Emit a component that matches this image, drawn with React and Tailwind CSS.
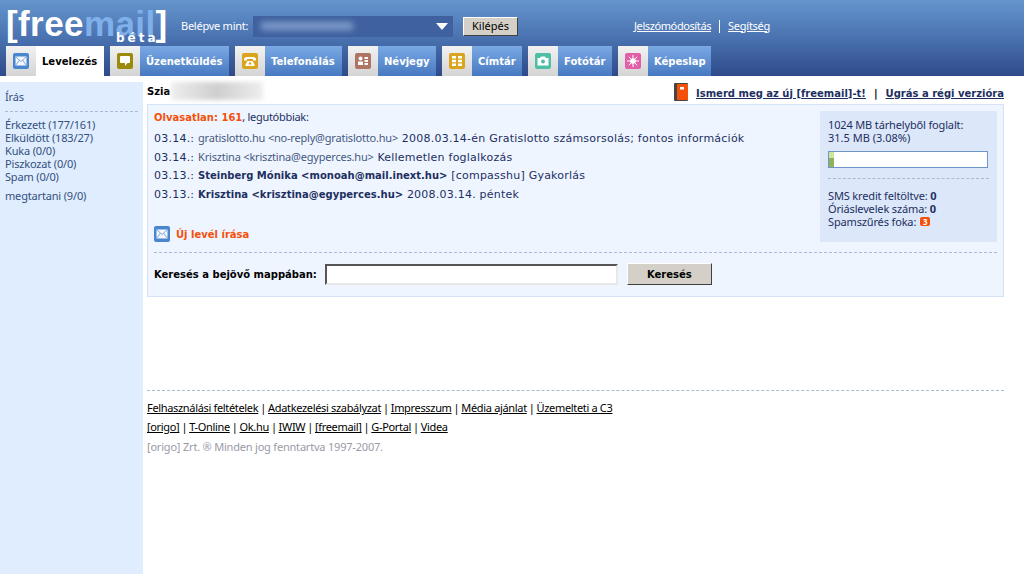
import React from 'react';

const tahoma = "font-['Noto_Sans','Open_Sans',sans-serif]";
const verdana = "font-['DejaVu_Sans',sans-serif]";

const MailIcon = ({ size = 16 }) => (
  <svg width={size} height={size} viewBox="0 0 16 16" className="block">
    <rect width="16" height="16" rx="2" fill="#4a86cf" />
    <rect x="2.500" y="3.500" width="11" height="9" fill="#f4f8fe" />
    <path d="M2.500 3.500 8 8.500l5.500-5M2.500 12.500 6.500 7M13.500 12.500 9.500 7" stroke="#7fa8dc" fill="none" strokeWidth="1" />
  </svg>
);

const ChatIcon = () => (
  <svg width="16" height="16" viewBox="0 0 16 16" className="block">
    <rect width="16" height="16" rx="2" fill="#9b8a0c" />
    <path d="M4 3h8a1 1 0 0 1 1 1v5a1 1 0 0 1-1 1h-1.500L8 13V10H4a1 1 0 0 1-1-1V4a1 1 0 0 1 1-1z" fill="#fff" />
  </svg>
);

const PhoneIcon = () => (
  <svg width="16" height="16" viewBox="0 0 16 16" className="block">
    <rect width="16" height="16" rx="2" fill="#d9a51c" />
    <path d="M2 7.500V5.500L4 4h8l2 1.500v2h-3V6H5v1.500z" fill="#fff" />
    <path d="M3.500 13V11.500L5.500 8h5l2 3.500V13z" fill="#fff" />
    <circle cx="8" cy="10.500" r="1.300" fill="#d9a51c" />
  </svg>
);

const CardIcon = () => (
  <svg width="16" height="16" viewBox="0 0 16 16" className="block">
    <rect width="16" height="16" rx="2" fill="#ae7565" />
    <circle cx="5.500" cy="5.500" r="2" fill="#fff" />
    <path d="M3 12V8.500h5V12zM9.500 4H13v2H9.500zM9.500 7H13v2H9.500zM9.500 10H13v2H9.500z" fill="#fff" />
  </svg>
);

const GridIcon = () => (
  <svg width="16" height="16" viewBox="0 0 16 16" className="block">
    <rect width="16" height="16" rx="2" fill="#d9a51c" />
    <path d="M3 3h4v2.500H3zM9 3h4v2.500H9zM3 6.800h4v2.500H3zM9 6.800h4v2.500H9zM3 10.600h4v2.500H3zM9 10.600h4v2.500H9z" fill="#fff" />
  </svg>
);

const CameraIcon = () => (
  <svg width="16" height="16" viewBox="0 0 16 16" className="block">
    <rect width="16" height="16" rx="2" fill="#4dbfa5" />
    <path d="M2.500 5H5l1-1.500h4L11 5h2.500v7.500h-11z" fill="#fff" />
    <circle cx="8" cy="8.500" r="2" fill="#4dbfa5" />
  </svg>
);

const SunIcon = () => (
  <svg width="16" height="16" viewBox="0 0 16 16" className="block">
    <rect width="16" height="16" rx="2" fill="#e05fa8" />
    <circle cx="8" cy="8" r="2.800" fill="#fff" />
    <path d="M8 2v12M2 8h12M3.800 3.800l8.400 8.400M12.200 3.800l-8.400 8.400" stroke="#fff" strokeWidth="1" />
  </svg>
);

const tabs = [
  { label: 'Levelezés', Icon: MailIcon, width: 'w-[98px]', active: true },
  { label: 'Üzenetküldés', Icon: ChatIcon, width: 'w-[119px]' },
  { label: 'Telefonálás', Icon: PhoneIcon, width: 'w-[107px]' },
  { label: 'Névjegy', Icon: CardIcon, width: 'w-[88px]' },
  { label: 'Címtár', Icon: GridIcon, width: 'w-[80px]' },
  { label: 'Fotótár', Icon: CameraIcon, width: 'w-[84px]' },
  { label: 'Képeslap', Icon: SunIcon, width: 'w-[93px]' },
];

const folders = ['Érkezett (177/161)', 'Elküldött (183/27)', 'Kuka (0/0)', 'Piszkozat (0/0)', 'Spam (0/0)'];

const mails = [
  { date: '03.14.:', from: 'gratislotto.hu <no-reply@gratislotto.hu>', subject: '2008.03.14-én Gratislotto számsorsolás; fontos információk' },
  { date: '03.14.:', from: 'Krisztina <krisztina@egyperces.hu>', subject: 'Kellemetlen foglalkozás' },
  { date: '03.13.:', from: 'Steinberg Mónika <monoah@mail.inext.hu>', subject: '[compasshu] Gyakorlás', unread: true },
  { date: '03.13.:', from: 'Krisztina <krisztina@egyperces.hu>', subject: '2008.03.14. péntek', unread: true },
];

const footer1 = ['Felhasználási feltételek', 'Adatkezelési szabályzat', 'Impresszum', 'Média ajánlat', 'Üzemelteti a C3'];
const footer2 = ['[origo]', 'T-Online', 'Ok.hu', 'IWIW', '[freemail]', 'G-Portal', 'Videa'];

function Tab({ label, Icon, width, active }) {
  return (
    <div className={`${width} h-[30px] flex`}>
      <div className="w-[30px] flex items-center justify-center bg-gradient-to-b from-[#f2f2f2] to-[#d4d4d4]">
        <Icon />
      </div>
      <div className={`flex-1 flex items-center pl-[6px] font-bold text-[10px] ${verdana} ${active ? 'bg-white text-black' : 'bg-gradient-to-b from-[#7aa9e4] to-[#4779c1] text-white'}`}>
        {label}
      </div>
    </div>
  );
}

function LinkRow({ items }) {
  return (
    <div className="flex items-center text-black text-[11px] tracking-[-0.33px] h-[19px]">
      {items.map((t, i) => (
        <React.Fragment key={t}>
          {i > 0 && <span className="px-[2px]">|</span>}
          <span className="underline">{t}</span>
        </React.Fragment>
      ))}
    </div>
  );
}

export default function App() {
  return (
    <div className={`w-[1024px] h-[574px] flex flex-col bg-white overflow-hidden ${tahoma}`}>
      <header className="h-[76px] shrink-0 bg-gradient-to-b from-[#6595cd] via-[#4a72b0] to-[#2f4a8a] flex flex-col">
        <div className="h-[46px] flex">
          <div className="w-[181px] relative pl-[6px] pt-[4px] font-['Liberation_Sans',sans-serif] font-bold text-[35px] leading-[40px] tracking-[0.4px] whitespace-nowrap text-white">
            [free<span className="text-[#7fb0ea]">mail</span>]
            <span className={`absolute left-[116px] top-[32px] text-[12px] leading-[12px] tracking-[3px] ${verdana}`}>béta</span>
          </div>
          <div className="flex items-center h-[42px] pt-[10px] text-[11px] text-white">
            <span className="w-[72px] tracking-[-0.25px]">Belépve mint:</span>
            <div className="w-[200px] h-[21px] bg-[#3f619f] flex items-center pl-[8px] pr-[4px]">
              <div className="w-[92px] h-[8px] bg-[#7f9ccb] blur-[3px]" />
              <svg width="14" height="7" viewBox="0 0 14 7" className="block ml-auto"><path d="M1 0h12L7 7z" fill="#fff" /></svg>
            </div>
            <button className="ml-[10px] w-[55px] h-[19px] bg-[#d4d0c8] text-black text-[11px] border border-t-white border-l-white border-r-[#404040] border-b-[#404040]">Kilépés</button>
            <span className="ml-[116px] underline tracking-[-0.4px]">Jelszómódosítás</span>
            <span className="w-px h-[13px] bg-white mx-[8px]" />
            <span className="underline tracking-[-0.25px]">Segítség</span>
          </div>
        </div>
        <nav className="flex gap-[6px] pl-[6px]">
          {tabs.map((t) => <Tab key={t.label} {...t} />)}
        </nav>
      </header>

      <div className="flex-1 flex pt-[6px]">
        <aside className="w-[143px] shrink-0 bg-[#e0edfe] text-[11px] tracking-[-0.17px] leading-[13px] text-[#33507f] px-[5px] pt-[8px]">
          <div>Írás</div>
          <div className="border-t border-dashed border-[#a9b9d6] mt-[8px] pt-[6px]">
            {folders.map((f) => <div key={f}>{f}</div>)}
            <div className="mt-[6px]">megtartani (9/0)</div>
          </div>
        </aside>

        <main className="w-[857px] ml-[4px]">
          <div className="h-[22px] flex items-center justify-between -mt-[2px]">
            <div className={`flex items-center font-bold text-[10px] text-black ${verdana}`}>
              Szia
              <div className="w-[92px] h-[18px] ml-[1px] bg-gradient-to-r from-[#eee] via-[#cfcfcf] to-[#eee] blur-[2px]" />
            </div>
            <div className={`flex items-center font-bold text-[10px] text-[#1d2f5f] pt-[4px] ${verdana}`}>
              <svg width="14" height="18" viewBox="0 0 14 18" className="mr-[8px] block -mt-[2px]">
                <rect width="14" height="18" rx="1" fill="#444" />
                <rect x="3" y="1" width="11" height="16" fill="#f5500a" />
                <rect x="6" y="4" width="4" height="2.500" fill="#fff" />
              </svg>
              <span className="underline">Ismerd meg az új [freemail]-t!</span>
              <span className="mx-[8px] text-black">|</span>
              <span className="underline">Ugrás a régi verzióra</span>
            </div>
          </div>

          <section className="h-[193px] mt-[2px] border border-[#d5e3f8] bg-[#eef5ff] flex flex-col">
            <div className="h-[147px] flex justify-between">
              <div className="pl-[6px] pt-[5px] flex flex-col">
                <div className="text-[11px] leading-[14px] text-[#1d2f5f] tracking-[-0.3px]">
                  <span className={`font-bold text-[10px] tracking-normal text-[#f5500a] ${verdana}`}>Olvasatlan: 161</span>, legutóbbiak:
                </div>
                <div className="mt-[3px] flex flex-col">
                  {mails.map((m) => (
                    <div key={m.from} className={`h-[19px] leading-[19px] whitespace-pre text-[11px] tracking-[0.23px] text-[#1d2f5f] ${verdana}`}>
                      {m.date}{' '}
                      {m.unread
                        ? <b className="text-[10px] tracking-normal">{m.from}</b>
                        : <span className={`${tahoma} tracking-[-0.2px] text-[#46597f]`}>{m.from}</span>}
                      {' '}{m.subject}
                    </div>
                  ))}
                </div>
                <div className={`mt-auto mb-[10px] flex items-center font-bold text-[10px] text-[#f5500a] ${verdana}`}>
                  <MailIcon size={16} />
                  <span className="ml-[6px]">Új levél írása</span>
                </div>
              </div>
              <div className="w-[177px] h-[131px] mt-[6px] mr-[6px] bg-[#dce7f9] px-[8px] pt-[7px] text-[11px] leading-[13px] text-[#1d2f5f]">
                <div className="tracking-[-0.15px]">1024 MB tárhelyből foglalt:</div>
                <div>31.5 MB (3.08%)</div>
                <div className="w-[160px] h-[17px] mt-[7px] border border-[#6f94c8] bg-white">
                  <div className="w-[5px] h-full bg-gradient-to-b from-[#cfe59a] from-40% to-[#8fb25a] to-40%" />
                </div>
                <div className="border-t border-dashed border-[#a9b9d6] mt-[10px] pt-[10px] tracking-[-0.15px]">
                  <div>SMS kredit feltöltve: <b>0</b></div>
                  <div>Óriáslevelek száma: <b>0</b></div>
                  <div className="flex items-center">
                    Spamszűrés foka:
                    <span className="ml-[4px] w-[10px] h-[9px] rounded-[2px] bg-[#f5500a] text-white font-bold text-[8px] leading-[9px] text-center">3</span>
                  </div>
                </div>
              </div>
            </div>
            <div className={`mx-[6px] border-t border-dashed border-[#a9b9d6] pt-[10px] flex items-center font-bold text-[10px] text-black ${verdana}`}>
              <span>Keresés a bejövő mappában:</span>
              <input className="ml-[8px] w-[293px] h-[21px] bg-white border-2 border-t-[#555] border-l-[#555] border-r-[#e8e8e8] border-b-[#e8e8e8]" />
              <button className="ml-[9px] w-[85px] h-[22px] bg-[#d4d0c8] font-bold border border-t-white border-l-white border-r-[#404040] border-b-[#404040]">Keresés</button>
            </div>
          </section>

          <footer className="mt-[93px] border-t border-dashed border-[#a9b9d6] pt-[8px]">
            <LinkRow items={footer1} />
            <LinkRow items={footer2} />
            <div className="h-[20px] flex items-center text-[11px] tracking-[-0.2px] text-[#9a9aa6]">[origo] Zrt. ® Minden jog fenntartva 1997-2007.</div>
          </footer>
        </main>
      </div>
    </div>
  );
}
